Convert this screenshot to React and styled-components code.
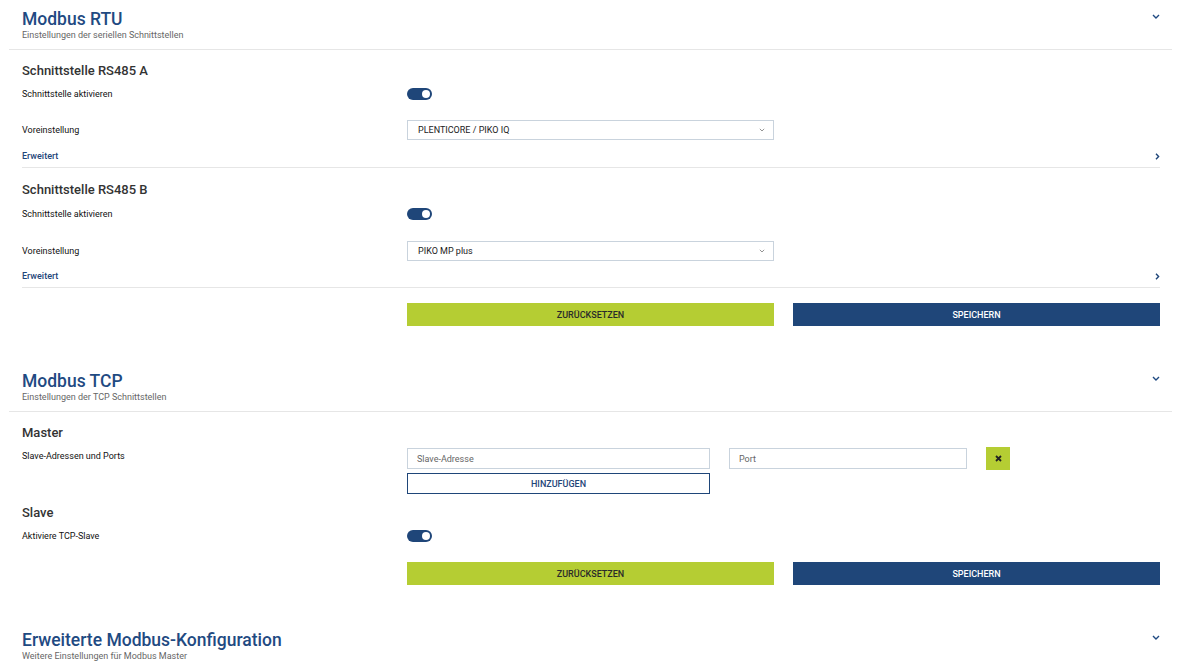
import React from "react";
import styled, { createGlobalStyle } from "styled-components";

const GlobalStyle = createGlobalStyle`
  body {
    margin: 0;
    background: #fff;
    font-family: Roboto, "Liberation Sans", sans-serif;
    color: #222;
  }
`;

const Page = styled.div`
  padding: 0 8px 40px 9px;
`;

const Section = styled.section`
  & + & {
    margin-top: 36px;
  }
`;

const Header = styled.header`
  display: flex;
  justify-content: space-between;
  align-items: flex-start;
  padding: 9px 12px 9px 13px;
  border-bottom: 1px solid #e6e6e6;
`;

const Title = styled.h2`
  margin: 0;
  font-size: 17.5px;
  line-height: 21px;
  font-weight: 500;
  color: #1f4a82;
`;

const Subtitle = styled.div`
  font-size: 9px;
  line-height: 10px;
  color: #666;
`;

const Chevron = styled.svg`
  margin-top: 5px;
  flex: none;
`;

const Body = styled.div`
  padding: 0 12px 0 13px;
`;

const SubHeading = styled.h3`
  margin: ${(p) => p.$mt ?? 11}px 0 0;
  font-size: 13px;
  line-height: 20px;
  font-weight: 500;
  color: #333;
`;

const Row = styled.div`
  display: grid;
  grid-template-columns: 385px 1fr;
  align-items: ${(p) => (p.$top ? "start" : "center")};
  min-height: ${(p) => p.$h || 22}px;
  margin-top: ${(p) => p.$mt || 0}px;
`;

const Label = styled.div`
  font-size: 9px;
  line-height: 18px;
  font-weight: 400;
  color: #111;
`;

const Toggle = styled.div`
  width: 25px;
  height: 12px;
  border-radius: 6px;
  background: #1f4679;
  display: flex;
  align-items: center;
  justify-content: flex-end;
  padding: 0 2px;
  box-sizing: border-box;

  &::after {
    content: "";
    width: 8px;
    height: 8px;
    border-radius: 50%;
    background: #fff;
  }
`;

const Pair = styled.div`
  display: grid;
  grid-template-columns: 367px 367px;
  column-gap: 19px;
`;

const Select = styled.div`
  height: 20px;
  box-sizing: border-box;
  border: 1px solid #c9d3dd;
  padding: 0 8px 0 10px;
  display: flex;
  align-items: center;
  justify-content: space-between;
  font-size: 9px;
  color: #222;
`;

const Advanced = styled.div`
  display: flex;
  justify-content: space-between;
  align-items: center;
  height: 22px;
  margin-top: ${(p) => p.$mt}px;
  border-bottom: 1px solid #e6e6e6;
  font-size: 9px;
  font-weight: 500;
  color: #1f4679;
`;

const Button = styled.div`
  height: 23px;
  display: flex;
  align-items: center;
  justify-content: center;
  font-size: 9px;
  font-weight: 500;
  background: ${(p) => (p.$primary ? "#1f4679" : "#b5cd33")};
  color: ${(p) => (p.$primary ? "#fff" : "#2a2a2a")};
`;

const MasterGrid = styled.div`
  display: grid;
  grid-template-columns: 303px 238px 24px;
  column-gap: 19px;
  row-gap: 3px;
  align-items: center;
`;

const Input = styled.div`
  height: 21px;
  box-sizing: border-box;
  border: 1px solid #c9d3dd;
  padding: 0 9px;
  display: flex;
  align-items: center;
  font-size: 9px;
  color: #666;
`;

const RemoveButton = styled.div`
  width: 24px;
  height: 23px;
  background: #b5cd33;
  display: flex;
  align-items: center;
  justify-content: center;
`;

const OutlineButton = styled.div`
  height: 21px;
  box-sizing: border-box;
  border: 1.5px solid #1f4679;
  display: flex;
  align-items: center;
  justify-content: center;
  font-size: 9px;
  font-weight: 500;
  color: #1f4679;
`;

const ChevronDown = () => (
  <Chevron width="8" height="5" viewBox="0 0 8 5">
    <path d="M1 1l3 3 3-3" fill="none" stroke="#1f4a82" strokeWidth="1.4" />
  </Chevron>
);

const ChevronRight = () => (
  <svg width="5" height="7" viewBox="0 0 5 7">
    <path d="M1 0.8l2.6 2.7L1 6.2" fill="none" stroke="#1f4679" strokeWidth="1.4" />
  </svg>
);

const SelectArrow = () => (
  <svg width="6" height="4" viewBox="0 0 6 4">
    <path d="M0.8 0.8L3 3l2.2-2.2" fill="none" stroke="#888" strokeWidth="0.9" />
  </svg>
);

function SectionHeader({ title, subtitle }) {
  return (
    <Header>
      <div>
        <Title>{title}</Title>
        <Subtitle>{subtitle}</Subtitle>
      </div>
      <ChevronDown />
    </Header>
  );
}

function Interface({ name, preset, extra = 0 }) {
  return (
    <>
      <SubHeading $mt={11 + extra}>{name}</SubHeading>
      <Row $mt={2 + extra}>
        <Label>Schnittstelle aktivieren</Label>
        <Toggle />
      </Row>
      <Row $mt={15 + extra} $h={20}>
        <Label>Voreinstellung</Label>
        <Pair>
          <Select>
            {preset}
            <SelectArrow />
          </Select>
        </Pair>
      </Row>
      <Advanced $mt={5 - extra}>
        Erweitert
        <ChevronRight />
      </Advanced>
    </>
  );
}

function Actions({ mt }) {
  return (
    <Row $mt={mt} $h={23}>
      <div />
      <Pair>
        <Button>ZURÜCKSETZEN</Button>
        <Button $primary>SPEICHERN</Button>
      </Pair>
    </Row>
  );
}

export default function App() {
  return (
    <Page>
      <GlobalStyle />
      <Section>
        <SectionHeader
          title="Modbus RTU"
          subtitle="Einstellungen der seriellen Schnittstellen"
        />
        <Body>
          <Interface name="Schnittstelle RS485 A" preset="PLENTICORE / PIKO IQ" />
          <Interface name="Schnittstelle RS485 B" preset="PIKO MP plus" extra={1} />
          <Actions mt={15} />
        </Body>
      </Section>

      <Section>
        <SectionHeader title="Modbus TCP" subtitle="Einstellungen der TCP Schnittstellen" />
        <Body>
          <SubHeading>Master</SubHeading>
          <Row $mt={4} $top>
            <Label>Slave-Adressen und Ports</Label>
            <MasterGrid>
              <Input>Slave-Adresse</Input>
              <Input>Port</Input>
              <RemoveButton>
                <svg width="7" height="7" viewBox="0 0 7 7">
                  <path d="M1 1l5 5M6 1L1 6" stroke="#222" strokeWidth="1.8" />
                </svg>
              </RemoveButton>
              <OutlineButton>HINZUFÜGEN</OutlineButton>
            </MasterGrid>
          </Row>
          <SubHeading $mt={9}>Slave</SubHeading>
          <Row $mt={2}>
            <Label>Aktiviere TCP-Slave</Label>
            <Toggle />
          </Row>
          <Actions mt={15} />
        </Body>
      </Section>

      <Section>
        <SectionHeader
          title="Erweiterte Modbus-Konfiguration"
          subtitle="Weitere Einstellungen für Modbus Master"
        />
      </Section>
    </Page>
  );
}
